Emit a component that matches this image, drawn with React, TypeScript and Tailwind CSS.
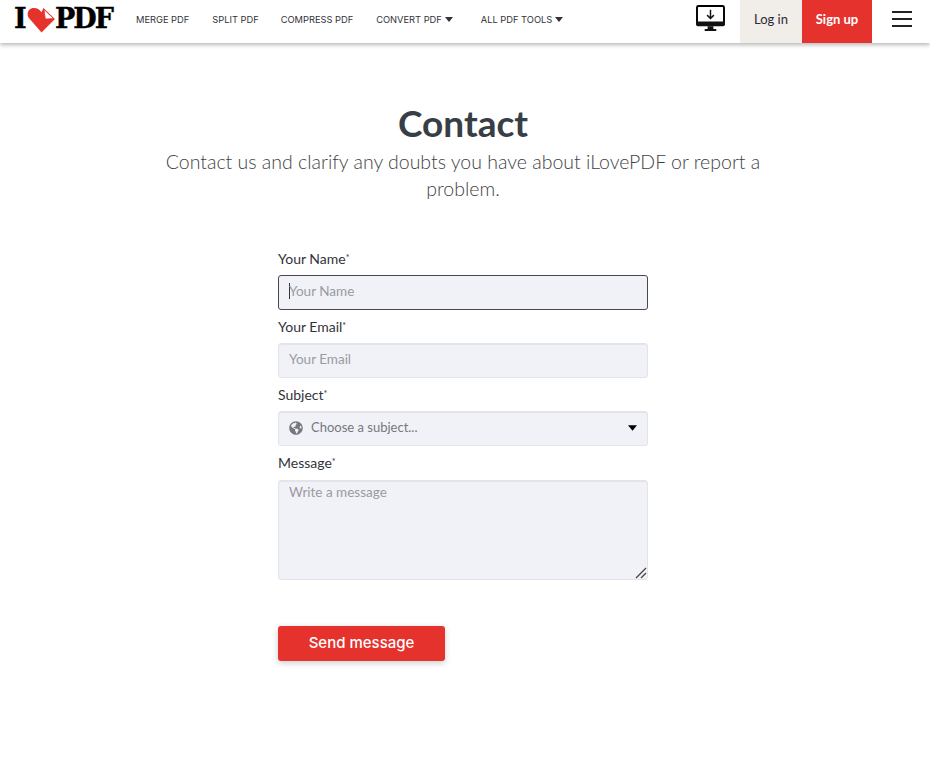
import { FaGlobeAmericas } from "react-icons/fa";

const body = "[font-family:Lato,'Open_Sans',sans-serif]";

function Caret({ className }: { className: string }) {
  return (
    <svg viewBox="0 0 8 5" className={className} fill="currentColor">
      <path d="M0 0h8L4 5z" />
    </svg>
  );
}

function Header() {
  return (
    <header className="flex h-[43px] items-stretch bg-white shadow-[0_2px_4px_rgba(0,0,0,0.28)]">
      <a className="ml-[14px] flex w-[100px] items-center pb-[6px] text-[27px] font-bold leading-none text-black [-webkit-text-stroke:0.4px_black] [font-family:'DejaVu_Serif',serif]">
        <span className="w-[13px] shrink-0">I</span>
        <svg viewBox="0 0 30 27" className="h-[26px] w-[29px] shrink-0 translate-y-[1px]">
          <path d="M15 26.5 1.5 11C-1 6 2 1 7 1c4 0 6.5 2 8 4.5L17 1l12 11.5z" fill="#e5322d" />
          <path d="M17.5 2.5 27.5 12 19 12.5z" fill="#fff" stroke="#e5322d" strokeWidth="0.8" />
        </svg>
        <span className="-ml-[1px] shrink-0 tracking-[-2px]">PDF</span>
      </a>
      <nav className="ml-[8px] flex items-center pb-[4px] text-[9.3px] uppercase text-[#33333b] [font-family:Inter,sans-serif]">
        <a className="ml-[14px]">Merge PDF</a>
        <a className="ml-[23px]">Split PDF</a>
        <a className="ml-[22px]">Compress PDF</a>
        <a className="ml-[23px] flex items-center gap-[3px]">
          Convert PDF <Caret className="h-[5px] w-[8px]" />
        </a>
        <a className="ml-[28px] flex items-center gap-[3px]">
          All PDF Tools <Caret className="h-[5px] w-[8px]" />
        </a>
      </nav>
      <div className="ml-auto flex items-stretch">
        <div className="mr-[15px] flex items-center pb-[6px]">
          <svg viewBox="0 0 30 28" className="h-[27px] w-[29px]">
            <rect x="1" y="1" width="28" height="19" rx="1.5" fill="#fff" stroke="#000" strokeWidth="2" />
            <path d="M0 17h30v3a2 2 0 0 1-2 2H2a2 2 0 0 1-2-2z" fill="#111" />
            <path d="M12 22h6v3h3v2H9v-2h3z" fill="#111" />
            <path d="M15 5v9M11.5 10.5 15 14l3.5-3.5" fill="none" stroke="#111" strokeWidth="1.5" />
          </svg>
        </div>
        <a className={`flex w-[62px] items-center justify-center bg-[#f1eeea] pb-[4px] text-[13px] text-[#2b2b33] ${body}`}>Log in</a>
        <a className={`flex w-[70px] items-center justify-center bg-[#e5322d] pb-[4px] text-[13px] font-bold text-white ${body}`}>Sign up</a>
        <div className="flex w-[58px] flex-col items-center justify-center gap-[5px] pb-[5px] pl-[2px]">
          <span className="h-[2px] w-[20px] bg-[#222]" />
          <span className="h-[2px] w-[20px] bg-[#222]" />
          <span className="h-[2px] w-[20px] bg-[#222]" />
        </div>
      </div>
    </header>
  );
}

function Label({ children, className = "h-[24px]" }: { children: string; className?: string }) {
  return (
    <label className={`block text-[14px] leading-[15px] text-[#33333b] ${className}`}>
      {children}
      <span className="relative -top-[3px] text-[9px]">*</span>
    </label>
  );
}

const field =
  "h-[35px] w-full rounded-[3px] border border-[#e3e4ea] bg-[#f1f2f7] px-[10px] text-[13.5px] text-[#33333b] shadow-[inset_0_1px_1px_rgba(0,0,0,0.06)] outline-none placeholder:text-[#9a9aa2]";

export default function App() {
  return (
    <div className={`min-h-[778px] bg-white ${body}`}>
      <Header />
      <main className="flex flex-col items-center pr-[4px] pt-[56px]">
        <h1 className="text-[37px] font-bold leading-[48px] text-[#383e45]">Contact</h1>
        <p className="mt-[1px] w-[620px] text-center text-[19.5px] font-light leading-[27px] text-[#3f3f46]">
          Contact us and clarify any doubts you have about iLovePDF or report a problem.
        </p>
        <form className="mt-[49px] w-[370px]">
          <Label>Your Name</Label>
          <div className="relative mb-[9px] flex h-[35px] items-center rounded-[3px] border border-[#47474f] bg-[#f1f2f7] pb-[3px] pl-[10px] text-[13.5px] text-[#9a9aa2]">
            <span className="-mr-px h-[16px] w-px bg-[#33333b]" />
            Your Name
          </div>
          <Label>Your Email</Label>
          <input className={`${field} mb-[9px] block pb-[3px]`} placeholder="Your Email" />
          <Label>Subject</Label>
          <div className={`${field} mb-[9px] flex items-center pb-[1px]`}>
            <FaGlobeAmericas className="h-[14px] w-[14px] text-[#77777f]" />
            <span className="ml-[8px] text-[13px] text-[#77777f]">Choose a subject...</span>
            <Caret className="ml-auto h-[6px] w-[9px] text-black" />
          </div>
          <Label className="h-[25px]">Message</Label>
          <div className="relative">
            <textarea className={`${field} block h-[100px] resize-none pt-[1px]`} placeholder="Write a message" />
            <svg viewBox="0 0 12 12" className="pointer-events-none absolute bottom-[1px] right-[1px] h-[12px] w-[12px]">
              <path d="M1 11 11 1M6 11l5-5" stroke="#444" strokeWidth="1.3" fill="none" />
            </svg>
          </div>
          <button
            type="button"
            className="mt-[46px] block h-[35px] w-[167px] rounded-[3px] bg-[#e5322d] text-[15px] font-medium text-white shadow-[0_2px_6px_rgba(0,0,0,0.2)] [font-family:Inter,sans-serif]"
          >
            Send message
          </button>
        </form>
      </main>
    </div>
  );
}
